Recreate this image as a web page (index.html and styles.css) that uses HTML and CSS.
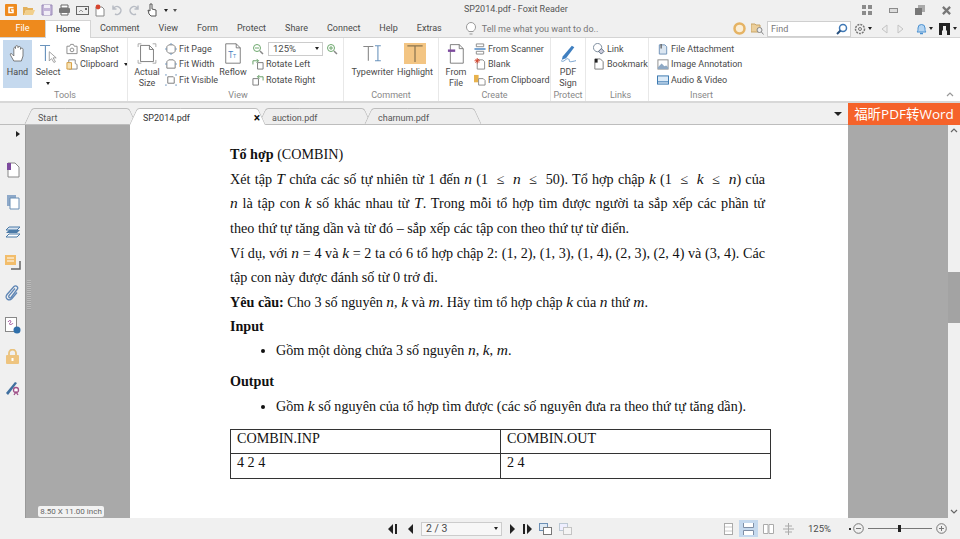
FILE: index.html
```html
<!DOCTYPE html>
<html lang="en">
<head>
    <meta charset="UTF-8">
    <meta name="viewport" content="width=device-width, initial-scale=1.0">
    <title>SP2014.pdf - Foxit Reader</title>
    <link rel="stylesheet" href="styles.css">
</head>
<body>

<header class="titlebar">
  <div class="qat">
    <svg class="logo" width="12" height="12" viewBox="0 0 12 12"><rect width="12" height="12" rx="1" fill="#ee8a1d"/><path d="M8.5 3.5H4v5h4V6H6" fill="none" stroke="#fff" stroke-width="1.5"/></svg>
    <svg width="14" height="12" viewBox="0 0 14 12"><path d="M1 3h4l1 1h5v2H4L2 11H1z" fill="#e3b15c"/><path d="M4 6h9l-2 5H2z" fill="#f1cf8c"/></svg>
    <svg width="12" height="12" viewBox="0 0 12 12"><path d="M1 1h10v10H1z" fill="#c4b6d8" stroke="#9a8ab8"/><path d="M3 1h6v3H3zM3 7h6v4H3z" fill="#f1eef6"/></svg>
    <svg width="13" height="12" viewBox="0 0 13 12"><path d="M3 1h7v3H3zM3 8h7v3H3z" fill="#fff" stroke="#666"/><rect x="1" y="4" width="11" height="5" rx="1" fill="#777"/></svg>
    <svg width="13" height="12" viewBox="0 0 13 12"><rect x=".5" y="2.5" width="12" height="8" fill="#eee" stroke="#666"/><path d="M3 8l2-2 2 2" stroke="#999" fill="none"/><rect x="9" y="4" width="2" height="2" fill="#666"/></svg>
    <svg width="12" height="13" viewBox="0 0 12 13"><path d="M2 3h6l2 2v7H2z" fill="#fff" stroke="#888"/><circle cx="4" cy="3" r="2.4" fill="#d6452f"/></svg>
    <svg width="12" height="12" viewBox="0 0 12 12"><path d="M2.5 4.5A4 4 0 1 1 4 10M2 1.5v3.5h3.500" fill="none" stroke="#b8bcc4" stroke-width="1.500"/></svg>
    <svg width="12" height="12" viewBox="0 0 12 12"><path d="M9.500 4.500A4 4 0 1 0 8 10M10 1.500v3.500H6.500" fill="none" stroke="#b8bcc4" stroke-width="1.500"/></svg>
    <svg width="14" height="14" viewBox="0 0 14 14"><path d="M5 1v7L3 7l1 4 2 2h5V7L7 6V1z" fill="#fff" stroke="#555"/></svg>
    <span class="caret"></span><span class="caret caret-bar"></span>
  </div>
  <div class="doc-title">SP2014.pdf - Foxit Reader</div>
  <div class="winbtns">
    <svg width="10" height="10" viewBox="0 0 10 10" fill="#8b8b8b"><path d="M0 0h4v4H0zM6 0h4v4H6zM0 6h4v4H0zM6 6h4v4H6z"/></svg>
    <svg width="9" height="5" viewBox="0 0 9 5"><rect x=".5" y=".5" width="8" height="4" fill="#ddd" stroke="#8b8b8b"/></svg>
    <svg width="10" height="10" viewBox="0 0 10 10"><path d="M3 0h7v7H3z" fill="#aaa"/><path d="M0 3h7v7H0z" fill="#777"/></svg>
    <svg width="9" height="9" viewBox="0 0 10 10"><path d="M1 1l8 8M9 1l-8 8" stroke="#777" stroke-width="2.500"/></svg>
  </div>
</header>

<nav class="menu">
  <a class="file">File</a>
  <a class="active">Home</a>
  <a>Comment</a>
  <a>View</a>
  <a>Form</a>
  <a>Protect</a>
  <a>Share</a>
  <a>Connect</a>
  <a>Help</a>
  <a>Extras</a>
  <div class="tell">
    <svg width="10" height="13" viewBox="0 0 10 13"><path d="M3 9.500C1 8 .5 6.500 .5 5a4.500 4.500 0 0 1 9 0c0 1.500-.5 3-2.500 4.500zM3.500 12h3" fill="#fff" stroke="#999"/></svg>
    <span>Tell me what you want to do..</span>
  </div>
  <div class="menu-right">
    <svg width="13" height="13" viewBox="0 0 13 13"><circle cx="6.500" cy="6.500" r="5" fill="#fbeed6" stroke="#e5b364" stroke-width="2.500"/></svg>
    <svg class="find-ico" width="13" height="13" viewBox="0 0 13 13"><path d="M0 2h4l1 1h4v7H0z" fill="#eccf9b" stroke="#c9a567"/><circle cx="8.500" cy="8" r="2.500" fill="#eee" stroke="#888"/><path d="M10.500 10l2 2.500" stroke="#888"/></svg>
    <div class="find">
      <span>Find</span>
      <svg width="12" height="12" viewBox="0 0 12 12"><circle cx="7" cy="5" r="3.500" fill="#fff" stroke="#3f78b5" stroke-width="1.500"/><path d="M4.500 7.500L1 11" stroke="#26507f" stroke-width="2"/></svg>
    </div>
    <svg class="gear" width="12" height="12" viewBox="0 0 12 12"><circle cx="6" cy="6" r="4.500" fill="none" stroke="#777" stroke-width="1.500" stroke-dasharray="2 1"/><circle cx="6" cy="6" r="1.500" fill="none" stroke="#777"/></svg>
    <span class="caret"></span>
    <svg class="arrow-ico" width="7" height="10" viewBox="0 0 7 10"><path d="M6 1v8L1 5z" fill="#eee" stroke="#c4c4c4"/></svg>
    <svg class="arrow-ico" width="7" height="10" viewBox="0 0 7 10"><path d="M1 1v8l5-4z" fill="#eee" stroke="#c4c4c4"/></svg>
    <svg class="bell" width="11" height="12" viewBox="0 0 11 12"><path d="M1 9c1-1 1-2 1-4a3.500 3.500 0 0 1 7 0c0 2 0 3 1 4z" fill="#b5d5f2" stroke="#4a90d0"/><path d="M4 10.500h3" stroke="#4a90d0" stroke-width="1.500"/></svg>
    <span class="caret"></span>
    <svg class="user" width="11" height="12" viewBox="0 0 11 12"><rect width="11" height="12" fill="#222"/><path d="M3 12V8l1-1V3h3v4l1 1v4z" fill="#eee"/></svg>
    <span class="caret"></span>
  </div>
</nav>

<section class="ribbon">
  <div class="group g-tools">
    <div class="tools">
      <div class="big hand" >
        <svg width="20" height="21" viewBox="0 0 24 24"><path d="M7 21l-4-7c-1-2 1-3 2-1l2 2V6c0-2 2-2 2 0V4c0-2 3-2 3 0v1c0-2 3-2 3 0v2c0-2 3-2 3 0v8l-2 6z" fill="#fff" stroke="#666"/></svg>
        <span>Hand</span>
      </div>
      <div class="big select">
        <svg width="19" height="20" viewBox="0 0 24 26"><path d="M1 2h13M8 2v20" stroke="#6b94bd" stroke-width="1.500" fill="none"/><path d="M13 10v12l3-3 3 5 2-1-3-5h4z" fill="#fff" stroke="#888"/></svg>
        <span>Select</span>
        <span class="caret"></span>
      </div>
      <div class="col">
        <div class="item"><svg width="12" height="12" viewBox="0 0 13 12"><path d="M1 3h3l1-2h3l1 2h3v8H1z" fill="#fff" stroke="#888"/><circle cx="6.500" cy="7" r="2" fill="none" stroke="#888"/></svg>SnapShot</div>
        <div class="item"><svg width="12" height="12" viewBox="0 0 13 13"><path d="M3 2h7v4l2 1v5H3z" fill="#fff" stroke="#888"/><path d="M1 5h5v7H1z" fill="#f6e2b6" stroke="#d59a3a"/></svg>Clipboard<span class="caret"></span></div>
      </div>
    </div>
    <div class="label">Tools</div>
  </div>

  <div class="group g-view">
    <div class="tools">
      <div class="big actual">
        <svg width="20" height="21" viewBox="0 0 24 26"><path d="M1 5V1h4M19 1h4v4M1 21v4h4M19 25h4v-4" fill="none" stroke="#999"/><path d="M4 3h11l5 5v15H4z" fill="#fff" stroke="#666"/><path d="M15 3v5h5" fill="none" stroke="#666"/></svg>
        <span>Actual<br>Size</span>
      </div>
      <div class="col">
        <div class="item"><svg width="12" height="12" viewBox="0 0 13 13"><path d="M4 2h5l2 2v5l-2 2H4L2 9V4z" fill="#fff" stroke="#777"/><path d="M6.500 0v2M6.500 11v2M0 6.500h2M11 6.500h2" stroke="#6b94bd"/></svg>Fit Page</div>
        <div class="item"><svg width="12" height="12" viewBox="0 0 13 13"><path d="M4 2h5l2 2v7H2V4z" fill="#fff" stroke="#777"/><path d="M0 6.500h2M11 6.500h2" stroke="#6b94bd"/></svg>Fit Width</div>
        <div class="item"><svg width="12" height="12" viewBox="0 0 13 13"><path d="M3 3h6l1 1v6H3z" fill="#fff" stroke="#777"/><path d="M0 1h2M11 1h2M0 12h2M11 12h2" stroke="#6b94bd"/></svg>Fit Visible</div>
      </div>
      <div class="big reflow">
        <svg width="18" height="21" viewBox="0 0 22 26"><path d="M2 1h13l5 5v19H2z" fill="#fff" stroke="#666"/><path d="M15 1v5h5" fill="none" stroke="#666"/><text x="5" y="18" class="tt">T<tspan font-size="7">T</tspan></text></svg>
        <span>Reflow</span>
      </div>
      <div class="col zoom-col">
        <div class="zoom-row">
          <svg width="12" height="12" viewBox="0 0 12 12"><circle cx="5" cy="5" r="3.500" fill="#fff" stroke="#6ea86e"/><path d="M3 5h4" stroke="#6ea86e"/><path d="M8 8l3 3" stroke="#888" stroke-width="1.500"/></svg>
          <div class="combo">125%<span class="caret"></span></div>
          <svg width="12" height="12" viewBox="0 0 12 12"><circle cx="5" cy="5" r="3.500" fill="#fff" stroke="#6ea86e"/><path d="M3 5h4M5 3v4" stroke="#6ea86e"/><path d="M8 8l3 3" stroke="#888" stroke-width="1.500"/></svg>
        </div>
        <div class="item"><svg width="12" height="12" viewBox="0 0 13 13"><path d="M6 5h6v7H6z" fill="#fff" stroke="#777"/><path d="M1 7V3h6M5 1L7 3 5 5" fill="none" stroke="#5f9a5f"/></svg>Rotate Left</div>
        <div class="item"><svg width="12" height="12" viewBox="0 0 13 13"><path d="M1 5h6v7H1z" fill="#fff" stroke="#777"/><path d="M12 7V3H6M8 1L6 3l2 2" fill="none" stroke="#5f9a5f"/></svg>Rotate Right</div>
      </div>
    </div>
    <div class="label">View</div>
  </div>

  <div class="group g-comment">
    <div class="tools">
      <div class="big typewriter">
        <svg width="21" height="20" viewBox="0 0 24 24"><path d="M1 3h12M7 3v17" stroke="#888" stroke-width="1.300" fill="none"/><path d="M15 2h7M18.500 2v18M15 20h7" stroke="#6b94bd" stroke-width="1.300" fill="none"/></svg>
        <span>Typewriter</span>
      </div>
      <div class="big highlight">
        <div class="hl-box"><svg width="22" height="21" viewBox="0 0 22 22"><path d="M3 3h16M11 3v17" stroke="#8a7550" stroke-width="1.300" fill="none"/></svg></div>
        <span>Highlight</span>
      </div>
    </div>
    <div class="label">Comment</div>
  </div>

  <div class="group g-create">
    <div class="tools">
      <div class="big fromfile">
        <svg width="18" height="21" viewBox="0 0 20 26"><path d="M3 2h11l5 5v18H3z" fill="#fff" stroke="#666"/><path d="M14 2v5h5" fill="none" stroke="#666"/><rect y="8" width="9" height="3" fill="#7d4a9e"/></svg>
        <span>From<br>File</span>
      </div>
      <div class="col">
        <div class="item"><svg width="12" height="12" viewBox="0 0 12 13"><path d="M2 1h8v3H2zM2 9h8v3H2z" fill="#fff" stroke="#888"/><path d="M0 6.500h12" stroke="#3f7fc0" stroke-width="1.500"/></svg>From Scanner</div>
        <div class="item"><svg width="12" height="12" viewBox="0 0 12 13"><path d="M3 2h6l2 2v8H3z" fill="#fff" stroke="#888"/><path d="M3 0v6M0 3h6M1 1l4 4M5 1L1 5" stroke="#d2452f"/></svg>Blank</div>
        <div class="item"><svg width="12" height="12" viewBox="0 0 13 13"><path d="M0 1h5v8H0z" fill="#e8b24c"/><path d="M5 5h5l2 2v5H5z" fill="#fff" stroke="#888"/></svg>From Clipboard</div>
      </div>
    </div>
    <div class="label">Create</div>
  </div>

  <div class="group g-protect">
    <div class="tools">
      <div class="big pdfsign">
        <svg width="19" height="20" viewBox="0 0 22 24"><path d="M4 15L15 2l3 2L8 17l-5 2z" fill="#3f7fc0"/><path d="M2 20c4 3 6-4 9-2s-3 5 9 2" fill="none" stroke="#5b8fc4"/></svg>
        <span>PDF<br>Sign</span>
      </div>
    </div>
    <div class="label">Protect</div>
  </div>

  <div class="group g-links">
    <div class="tools">
      <div class="col">
        <div class="item"><svg width="12" height="12" viewBox="0 0 13 13"><circle cx="5" cy="5" r="4.500" fill="#fff" stroke="#789"/><path d="M6 9l3-3 3 3-3 3z" fill="#ccd" stroke="#567"/></svg>Link</div>
        <div class="item"><svg width="12" height="12" viewBox="0 0 11 13"><path d="M1 1h6l3 3v8H1z" fill="#fff" stroke="#777"/><path d="M1 1h3v4H1z" fill="#222"/></svg>Bookmark</div>
      </div>
    </div>
    <div class="label">Links</div>
  </div>

  <div class="group g-insert">
    <div class="tools">
      <div class="col">
        <div class="item"><svg width="12" height="12" viewBox="0 0 12 13"><path d="M2 2h6l2 2v8H2z" fill="#dbe6f1" stroke="#6b8fb5"/><path d="M4 1v5" stroke="#666" stroke-width="1.500"/></svg>File Attachment</div>
        <div class="item"><svg width="12" height="12" viewBox="0 0 13 13"><rect x="1" y="2" width="11" height="10" fill="#fff" stroke="#888"/><path d="M1 10l4-4 3 3 2-1 2 2v2H1z" fill="#8fa9c4"/></svg>Image Annotation</div>
        <div class="item"><svg width="12" height="10" viewBox="0 0 13 11"><rect x=".5" y="1" width="12" height="9" fill="#dcebf8" stroke="#2f6faa"/><path d="M1 7.500h11" stroke="#2f6faa"/></svg>Audio &amp; Video</div>
      </div>
    </div>
    <div class="label">Insert</div>
  </div>

  <svg class="collapse" width="8" height="5" viewBox="0 0 8 5"><path d="M1 4l3-3 3 3" fill="none" stroke="#999" stroke-width="1.200"/></svg>
</section>

<div class="tabbar">
  <div class="tab t-start"><span>Start</span></div>
  <div class="tab t-doc active"><span>SP2014.pdf</span><b>×</b></div>
  <div class="tab t-auction"><span>auction.pdf</span></div>
  <div class="tab t-charnum"><span>charnum.pdf</span></div>
  <div class="tab-menu"><span class="caret caret-lg"></span></div>
  <div class="promo">福昕PDF转Word</div>
</div>

<main class="main">
  <aside class="side">
    <span class="side-arrow"></span>
    <svg width="14" height="16" viewBox="0 0 14 16"><path d="M2 1h7l4 4v10H2z" fill="#fff" stroke="#888"/><path d="M1 1h4v7H1z" fill="#7d4a9e"/></svg>
    <svg width="14" height="16" viewBox="0 0 14 16"><path d="M1 1h9v11H1z" fill="#8ea9c9"/><path d="M4 4h9v11H4z" fill="#fff" stroke="#6b8fb5"/></svg>
    <svg width="16" height="14" viewBox="0 0 16 14"><path d="M1 12l3-3h11l-3 3z" fill="#fff" stroke="#4b7aa8"/><path d="M1 8l3-3h11l-3 3z" fill="#4b7aa8"/><path d="M1 5l3-3h11l-3 3z" fill="#d8e3ef" stroke="#4b7aa8"/></svg>
    <svg width="16" height="15" viewBox="0 0 16 15"><rect width="11" height="10" fill="#f2bd6b"/><path d="M2 3h7M2 6h7" stroke="#fff"/><path d="M15 6v8H6" fill="none" stroke="#666" stroke-width="1.500"/></svg>
    <svg width="15" height="16" viewBox="0 0 15 16"><path d="M11 4L5 11c-1 2 1 3 2 2l6-8c2-2-1-5-3-3L3 10c-3 4 2 7 5 4l5-6" fill="none" stroke="#5f86b5" stroke-width="1.300" transform="translate(-1 -.5)"/></svg>
    <svg width="16" height="17" viewBox="0 0 16 17"><rect x=".5" y=".5" width="11" height="14" fill="#fff" stroke="#888"/><path d="M3 5c2-3 4-1 2 1s2 2 3 0" fill="none" stroke="#a0529a"/><circle cx="12" cy="13" r="3.500" fill="#2f6faa"/></svg>
    <svg width="13" height="15" viewBox="0 0 13 15"><path d="M3 7V4a3.500 3.500 0 0 1 7 0v3" fill="none" stroke="#e9c27d" stroke-width="1.800"/><rect y="6" width="13" height="9" rx="1" fill="#eec47f"/><rect x="5.500" y="9" width="2" height="3" fill="#fff"/></svg>
    <svg width="15" height="16" viewBox="0 0 15 16"><path d="M1 13L10 2l2 1L3 15z" fill="#3f6f9f"/><circle cx="11" cy="10" r="2.500" fill="#fff" stroke="#a0528a" stroke-width="1.300"/><path d="M9 15l2-3 2 3" fill="none" stroke="#a0528a" stroke-width="1.300"/></svg>
  </aside>

  <div class="viewer">
    <div class="grip"></div>
    <article class="page">
      <p><b>Tổ hợp</b> (COMBIN)</p>
      <p>
        <span class="ln">Xét tập <i>T</i> chứa các số tự nhiên từ 1 đến <i>n</i> (1 &nbsp;≤ &nbsp;<i>n</i> &nbsp;≤ &nbsp;50). Tổ hợp chập <i>k</i> (1 &nbsp;≤ &nbsp;<i>k</i> &nbsp;≤ &nbsp;<i>n</i>) của</span>
        <span class="ln"><i>n</i> là tập con <i>k</i> số khác nhau từ <i>T</i>. Trong mỗi tổ hợp tìm được người ta sắp xếp các phần tử</span>
        theo thứ tự tăng dần và từ đó – sắp xếp các tập con theo thứ tự từ điển.
      </p>
      <p>
        <span class="ln">Ví dụ, với <i>n</i> = 4 và <i>k</i> = 2 ta có 6 tổ hợp chập 2: (1, 2), (1, 3), (1, 4), (2, 3), (2, 4) và (3, 4). Các</span>
        tập con này được đánh số từ 0 trở đi.
      </p>
      <p><b>Yêu cầu:</b> Cho 3 số nguyên <i>n</i>, <i>k</i> và <i>m</i>. Hãy tìm tổ hợp chập <i>k</i> của <i>n</i> thứ <i>m</i>.</p>
      <p class="input"><b>Input</b></p>
      <ul><li>Gồm một dòng chứa 3 số nguyên <i>n</i>, <i>k</i>, <i>m</i>.</li></ul>
      <p class="output"><b>Output</b></p>
      <ul><li>Gồm <i>k</i> số nguyên của tổ hợp tìm được (các số nguyên đưa ra theo thứ tự tăng dần).</li></ul>
      <table>
        <tr><td class="c1">COMBIN.INP</td><td>COMBIN.OUT</td></tr>
        <tr><td class="c1">4 2 4</td><td>2 4</td></tr>
      </table>
    </article>
    <div class="page-size">8.50 X 11.00 inch</div>
  </div>

  <div class="scrollbar">
    <svg width="8" height="5" viewBox="0 0 8 5"><path d="M1 4l3-3 3 3" fill="none" stroke="#666" stroke-width="1.200"/></svg>
    <div class="thumb"></div>
    <svg width="8" height="5" viewBox="0 0 8 5"><path d="M1 1l3 3 3-3" fill="none" stroke="#666" stroke-width="1.200"/></svg>
  </div>
</main>

<footer class="status">
  <div class="pager">
    <svg width="10" height="10" viewBox="0 0 10 10" fill="#222"><path d="M5 0v10L0 5zM7 0h2v10H7z"/></svg>
    <svg class="prev" width="6" height="10" viewBox="0 0 6 10" fill="#222"><path d="M5 0v10L0 5z"/></svg>
    <div class="pagebox">2 / 3<span class="caret"></span></div>
    <svg width="6" height="10" viewBox="0 0 6 10" fill="#222"><path d="M1 0v10l5-5z"/></svg>
    <svg width="10" height="10" viewBox="0 0 10 10" fill="#222"><path d="M5 0v10l5-5zM1 0h2v10H1z"/></svg>
    <svg width="13" height="12" viewBox="0 0 13 12"><rect x=".5" y=".5" width="8" height="7" fill="#dce8f3" stroke="#6b8fb5"/><rect x="4.500" y="4.500" width="8" height="7" fill="#fff" stroke="#777"/></svg>
    <svg width="13" height="12" viewBox="0 0 13 12"><rect x=".5" y=".5" width="8" height="7" fill="#eef" stroke="#bcc8d4"/><rect x="4.500" y="4.500" width="8" height="7" fill="#f4f4f4" stroke="#c4c4c4"/></svg>
  </div>
  <div class="views">
    <span class="view"><svg width="9" height="12" viewBox="0 0 9 12"><rect x=".5" y=".5" width="8" height="11" fill="#fff" stroke="#aaa"/><path d="M1 4h7M1 8h7" stroke="#ccc"/></svg></span>
    <span class="view on"><svg width="11" height="12" viewBox="0 0 11 12"><path d="M.5 0v4.500h10V0M.5 12V7.500h10V12" fill="#fff" stroke="#7f8fa6"/></svg></span>
    <span class="view"><svg width="11" height="12" viewBox="0 0 11 12"><path d="M.5 1.500h4.500v9H.5zM6 1.500h4.500v9H6z" fill="#fff" stroke="#aaa"/></svg></span>
    <span class="view"><svg width="11" height="12" viewBox="0 0 11 12"><path d="M0 6h11M5.500 0v12M2 3h7M2 9h7" stroke="#aaa"/></svg></span>
  </div>
  <div class="zoomctl">
    <span class="pct">125%</span>
    <span class="caret"></span>
    <svg width="11" height="11" viewBox="0 0 11 11"><circle cx="5.500" cy="5.500" r="4.800" fill="none" stroke="#777"/><path d="M3 5.500h5" stroke="#777"/></svg>
    <div class="slider"><div class="knob"></div></div>
    <svg width="11" height="11" viewBox="0 0 11 11"><circle cx="5.500" cy="5.500" r="4.800" fill="none" stroke="#777"/><path d="M3 5.500h5M5.500 3v5" stroke="#777"/></svg>
  </div>
</footer>

</body>
</html>
```

FILE: styles.css
```css
* {
    box-sizing: border-box;
}
html, body {
    margin: 0;
    height: 539px;
    overflow: hidden;
}
body {
    width: 960px;
    background: #f0f0f0;
    color: #4a4a4a;
    font-family: Roboto, sans-serif;
    font-size: 9px;
    display: flex;
    flex-direction: column;
}
svg {
    flex: none;
    display: block;
}
.caret {
    display: inline-block;
    width: 0;
    height: 0;
    border-left: 2px solid transparent;
    border-right: 2px solid transparent;
    border-top: 3px solid #222;
}
.caret-bar {
    border-top-color: #555;
}
.caret-lg {
    border-left-width: 4px;
    border-right-width: 4px;
    border-top-width: 4px;
}

/* title bar */
.titlebar {
    height: 20px;
    display: flex;
    align-items: center;
    position: relative;
}
.qat {
    display: flex;
    align-items: center;
    gap: 5px;
    padding-left: 5px;
}
.doc-title {
    position: absolute;
    left: 464px;
    top: 4px;
    color: #555;
}
.winbtns {
    margin-left: auto;
    display: flex;
    align-items: center;
    gap: 17px;
    padding-right: 9px;
}

/* menu tabs */
.menu {
    height: 18px;
    display: flex;
    align-items: center;
    border-bottom: 1px solid #d4d4d4;
}
.menu a {
    line-height: 17px;
    margin-left: 19px;
}
.menu .file {
    margin: 0;
    width: 45px;
    height: 17px;
    background: #ee8a1d;
    color: #fff;
    text-align: center;
}
.menu .active {
    margin: 0 -10px 0 0;
    width: 46px;
    height: 18px;
    background: #fff;
    border: 1px solid #d4d4d4;
    border-bottom: none;
    text-align: center;
    color: #222;
    position: relative;
    z-index: 1;
}
.tell {
    display: flex;
    align-items: center;
    gap: 6px;
    margin-left: 24px;
    color: #777;
}
.menu-right {
    margin-left: auto;
    display: flex;
    align-items: center;
    padding-right: 3px;
}
.find-ico {
    margin-left: 5px;
}
.find {
    width: 84px;
    height: 16px;
    margin-left: 3px;
    padding: 0 2px 0 3px;
    background: #fff;
    border: 1px solid #cfcfcf;
    display: flex;
    align-items: center;
    justify-content: space-between;
    color: #777;
}
.gear {
    margin: 0 2px 0 3px;
}
.arrow-ico {
    margin-left: 9px;
}
.bell {
    margin: 0 2px 0 12px;
}
.user {
    margin: 0 3px 0 6px;
}

/* ribbon */
.ribbon {
    height: 65px;
    background: #fff;
    display: flex;
    position: relative;
    border-bottom: 2px solid #d8d8d8;
}
.group {
    display: flex;
    flex-direction: column;
    padding-top: 2px;
}
.group + .group {
    border-left: 1px solid #e8e8e8;
}
.tools {
    height: 50px;
    display: flex;
}
.label {
    text-align: center;
    color: #888;
    line-height: 11px;
}
.g-tools { width: 127px; padding-left: 3px; }
.g-view { width: 216px; padding-left: 5px; }
.g-comment { width: 95px; }
.g-create { width: 112px; }
.g-protect { width: 35px; }
.g-links { width: 63px; padding-left: 7px; }
.g-insert { width: 98px; padding-left: 8px; }
.g-links .col, .g-insert .col {
    margin-left: 0;
}
.big {
    flex: none;
    display: grid;
    grid-template-rows: 27px auto;
    justify-items: center;
    align-items: center;
    text-align: center;
    line-height: 11px;
}
.hand {
    width: 29px;
    height: 48px;
    background: #c5d9ee;
    align-content: start;
}
.select {
    width: 30px;
    margin-left: 1px;
    align-content: start;
}
.select .caret {
    margin-top: 4px;
}
.col {
    display: flex;
    flex-direction: column;
    padding-top: 1px;
    margin-left: 3px;
}
.item {
    height: 15.500px;
    display: flex;
    align-items: center;
    gap: 2px;
    white-space: nowrap;
}
.item .caret {
    margin-left: 4px;
}
.actual {
    width: 26px;
    margin-left: 1px;
    align-content: start;
}
.g-view .col {
    margin-left: 5px;
    width: 52px;
}
.reflow {
    width: 32px;
    align-content: start;
}
.tt {
    font-family: "Open Sans", sans-serif;
    font-size: 11px;
    fill: #3f7fc0;
}
.g-view .zoom-col {
    width: auto;
    margin-left: 3px;
}
.zoom-row {
    height: 15.500px;
    display: flex;
    align-items: center;
    gap: 3px;
}
.combo {
    width: 55px;
    height: 14px;
    margin-left: 1px;
    padding: 0 3px 0 4px;
    border: 1px solid #ccc;
    display: flex;
    align-items: center;
    justify-content: space-between;
    font-size: 9.500px;
}
.typewriter {
    width: 47px;
    margin-left: 5px;
    align-content: start;
}
.highlight {
    width: 38px;
    align-content: start;
}
.hl-box {
    width: 22px;
    height: 21px;
    background: #f3c583;
}
.fromfile {
    width: 30px;
    margin-left: 2px;
    align-content: start;
}
.pdfsign {
    width: 34px;
    align-content: start;
}
.collapse {
    position: absolute;
    right: 6px;
    bottom: 4px;
}

/* document tabs */
.tabbar {
    height: 22px;
    display: flex;
    align-items: flex-end;
    position: relative;
    padding-left: 28px;
    border-bottom: 1px solid #bdbdbd;
}
.tab {
    height: 16px;
    position: relative;
    display: flex;
    align-items: center;
    justify-content: space-between;
    color: #555;
    padding: 4px 2px 0 10px;
    z-index: 0;
}
.tab::before,
.tab::after {
    content: "";
    position: absolute;
    top: 0;
    bottom: 0;
    width: 60%;
    background: #eeeeee;
    border-top: 1px solid #bdbdbd;
    z-index: -1;
}
.tab::before {
    left: 0;
    border-left: 1px solid #bdbdbd;
    border-radius: 3px 0 0 0;
    transform: skewX(-25deg);
}
.tab::after {
    right: 0;
    border-right: 1px solid #bdbdbd;
    border-radius: 0 3px 0 0;
    transform: skewX(25deg);
}
.tab.active::before,
.tab.active::after {
    background: #fff;
}
.tab.active {
    color: #333;
    z-index: 1;
    height: 17px;
    margin-bottom: -1px;
    padding-top: 2px;
}
.tab b {
    font-size: 12px;
    line-height: 12px;
    color: #111;
}
.t-start { width: 105px; }
.t-doc { width: 129px; }
.t-auction { width: 106px; }
.t-charnum { width: 110px; }
.tab-menu {
    margin-left: auto;
    height: 21px;
    width: 14px;
    display: flex;
    align-items: center;
}
.promo {
    width: 112px;
    height: 22px;
    margin-bottom: -1px;
    background: #f5622a;
    color: #fff;
    font-family: "Open Sans", "Noto Sans CJK SC", sans-serif;
    font-size: 13.500px;
    line-height: 22px;
    text-align: center;
    white-space: nowrap;
}

/* main area */
.main {
    height: 393px;
    display: flex;
}
.side {
    width: 25px;
    display: flex;
    flex-direction: column;
    align-items: center;
    gap: 15.500px;
    padding-top: 6px;
}
.side-arrow {
    align-self: flex-start;
    margin: 0 0 9.500px 16px;
    width: 0;
    height: 0;
    border-top: 3px solid transparent;
    border-bottom: 3px solid transparent;
    border-left: 4px solid #222;
}
.viewer {
    width: 923px;
    background: #a9a9a9;
    border-left: 1px solid #999;
    padding-left: 104px;
    position: relative;
}
.grip {
    position: absolute;
    left: 1px;
    top: 155px;
    width: 4px;
    height: 30px;
    background: repeating-linear-gradient(#bbb 0 1px, #a0a0a0 1px 2px);
}
.page {
    width: 718px;
    height: 393px;
    background: #fff;
    padding: 17px 77px 0 100px;
    color: #111;
    font-family: "Liberation Serif", serif;
    font-size: 14.150px;
    line-height: 24.650px;
}
.page p {
    margin: 0;
}
.ln {
    display: block;
    margin-right: 6px;
    text-align: justify;
    text-align-last: justify;
}
.page i {
    font-size: 15.500px;
    line-height: 1;
}
.page ul {
    margin: 0;
    padding: 0 0 0 46px;
}
.page li {
    list-style: disc;
}
.page .input {
    margin-top: -1px;
}
.page .output {
    margin-top: 6.500px;
}
.page table {
    margin-top: 10px;
    width: 541px;
    border-collapse: collapse;
    line-height: 16px;
}
.page td {
    height: 24.500px;
    padding: 0 6px 7px;
    border: 1px solid #333;
}
.c1 {
    width: 270px;
}
.page-size {
    position: absolute;
    left: 12px;
    bottom: 1px;
    width: 66px;
    height: 11px;
    background: #f2f2f2;
    border-radius: 2px;
    color: #666;
    font-size: 8px;
    line-height: 11px;
    text-align: center;
    white-space: nowrap;
}
.scrollbar {
    width: 12px;
    display: flex;
    flex-direction: column;
    align-items: center;
    justify-content: space-between;
    position: relative;
    padding: 3px 0 4px;
}
.thumb {
    position: absolute;
    left: 0;
    top: 147px;
    width: 12px;
    height: 51px;
    background: #a3a3a3;
}

/* status bar */
.status {
    height: 21px;
    display: flex;
    align-items: center;
    position: relative;
}
.pager {
    margin-left: 388px;
    display: flex;
    align-items: center;
    gap: 7px;
}
.prev {
    margin-left: 3px;
}
.pagebox {
    width: 81px;
    height: 14px;
    background: #f7f7f7;
    border: 1px solid #ccc;
    padding: 0 3px 0 4px;
    display: flex;
    align-items: center;
    justify-content: space-between;
    font-size: 10.500px;
}
.views {
    margin-left: 147px;
    display: flex;
    align-items: center;
    gap: 1px;
}
.view {
    width: 19px;
    height: 17px;
    display: flex;
    align-items: center;
    justify-content: center;
}
.view.on {
    background: #c5d9ee;
}
.zoomctl {
    margin-left: 10px;
    display: flex;
    align-items: center;
}
.pct {
    width: 41px;
    font-size: 9.500px;
}
.zoomctl .caret {
    border: none;
    width: 2px;
    height: 2px;
    background: #333;
    margin-right: 2px;
}
.slider {
    width: 64px;
    height: 1px;
    background: #777;
    margin: 0 4px;
    display: flex;
    align-items: center;
    padding-left: 30px;
}
.knob {
    width: 3px;
    height: 7px;
    flex: none;
    background: #222;
}
```
